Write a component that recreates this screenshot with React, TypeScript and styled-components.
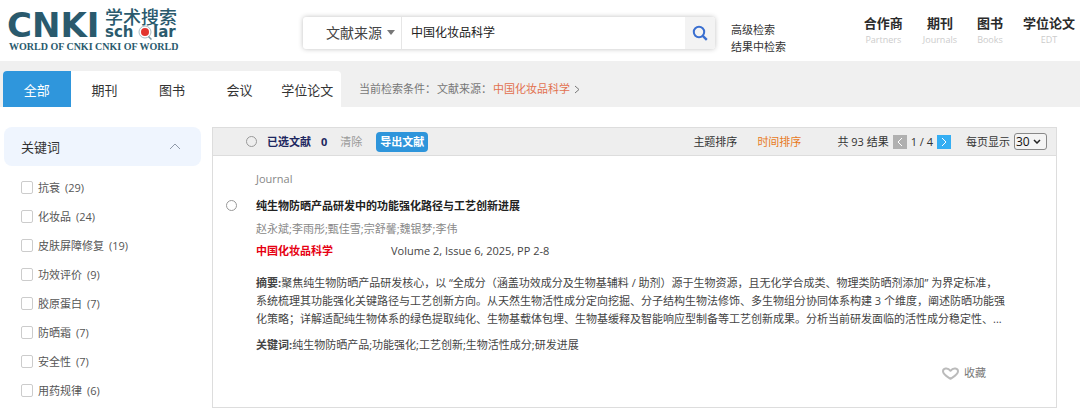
import React from "react";
import styled, { createGlobalStyle } from "styled-components";

const GlobalStyle = createGlobalStyle`
  *, *::before, *::after { box-sizing: border-box; }
  body {
    margin: 0;
    background: #fff;
    color: #444;
    font: 11px/18px "Open Sans", "Noto Sans CJK SC", sans-serif;
  }
  button, input, select { font: inherit; color: inherit; margin: 0; }
  button { cursor: pointer; }
  a { color: inherit; text-decoration: none; }
  h1, h2, p, ul { margin: 0; padding: 0; font-size: inherit; }
  ul { list-style: none; }
`;

const Header = styled.header`
  display: flex;
  align-items: center;
  height: 61px;
  padding: 0 5px 0 8px;
`;

const LogoLink = styled.a`
  display: block;
  flex: none;
  height: 57px;
  margin-right: 115px;
`;

const SearchForm = styled.form`
  display: flex;
  flex: 0 1 412px;
  height: 32px;
  margin-top: 4px;
  border-radius: 3px;
  background: #fff;
  box-shadow: 0 0 5px rgba(0, 0, 0, 0.25);
  overflow: hidden;
`;

const FieldPicker = styled.div`
  display: flex;
  align-items: center;
  width: 99px;
  flex: none;
  padding-left: 23px;
  gap: 5px;
  border-right: 1px solid #e6e6e6;
`;

const FieldSelect = styled.select`
  appearance: none;
  width: 56px;
  padding: 0;
  border: 0;
  background: transparent;
  font-size: 14px;
  line-height: 20px;
  color: #444;
`;

const SearchInput = styled.input`
  flex: 1;
  min-width: 0;
  border: 0;
  outline: 0;
  padding: 0 9px;
  font-size: 12px;
  color: #222;
`;

const SearchButton = styled.button`
  display: flex;
  align-items: center;
  justify-content: center;
  width: 30px;
  border: 0;
  padding: 0;
  background: #f3f3f3;
`;

const SearchLinks = styled.div`
  display: flex;
  flex-direction: column;
  margin: 14px 0 0 16px;
  line-height: 17px;
  color: #333;
`;

const SiteNav = styled.nav`
  display: flex;
  gap: 20px;
  margin-left: auto;
`;

const SiteNavLink = styled.a`
  display: flex;
  flex-direction: column;
  align-items: center;
  font-size: 13px;
  line-height: 18px;
  font-weight: 700;
  color: #2b2b2b;
`;

const SiteNavSub = styled.span`
  font-size: 9px;
  line-height: 15px;
  font-weight: 400;
  color: #ccc;
`;

const Band = styled.div`
  display: flex;
  align-items: flex-end;
  height: 46px;
  padding-left: 3px;
  background: #f0f0f0;
`;

const Tabs = styled.nav`
  display: flex;
  flex: 0 0 338px;
  height: 36px;
  border-radius: 4px 4px 0 0;
  background: #fff;
  overflow: hidden;
`;

const Tab = styled.a<{ $active?: boolean }>`
  flex: 1;
  text-align: center;
  font-size: 13px;
  line-height: 38px;
  color: ${(p) => (p.$active ? "#fff" : "#333")};
  background: ${(p) => (p.$active ? "#2f96dc" : "transparent")};
`;

const Conditions = styled.div`
  display: flex;
  align-items: center;
  height: 36px;
  margin-left: 18px;
  gap: 1px;
  color: #777;
`;

const ConditionValue = styled.a`
  display: flex;
  align-items: center;
  gap: 4px;
  color: #e2714f;
`;

const Page = styled.div`
  display: flex;
  align-items: flex-start;
  gap: 11px;
  padding: 20px 23px 6px 4px;
`;

const Sidebar = styled.aside`
  flex: 0 0 197px;
`;

const FacetHeader = styled.button`
  display: flex;
  align-items: center;
  justify-content: space-between;
  width: 100%;
  height: 39px;
  padding: 0 20px 0 17px;
  border: 0;
  border-radius: 8px;
  background: #eff5fe;
  font-size: 13px;
  color: #333;
`;

const FacetList = styled.ul`
  padding: 7px 0 0 17px;
`;

const FacetLabel = styled.label`
  display: flex;
  align-items: center;
  gap: 5px;
  height: 29px;
  color: #555;
`;

const Checkbox = styled.input`
  appearance: none;
  width: 12px;
  height: 13px;
  border: 1px solid #ccc;
  border-radius: 2px;
  background: #fff;
`;

const Radio = styled.input`
  appearance: none;
  flex: none;
  width: 11px;
  height: 11px;
  border: 1px solid #999;
  border-radius: 50%;
  background: transparent;
`;

const Results = styled.main`
  flex: 1;
  min-width: 0;
  border: 1px solid #ddd;
`;

const Toolbar = styled.div`
  display: flex;
  align-items: center;
  height: 28px;
  padding: 0 9px 0 33px;
  background: #eee;
  border-bottom: 1px solid #ddd;
  white-space: nowrap;
  color: #333;
`;

const Selected = styled.label`
  display: flex;
  align-items: center;
  gap: 10px;
  font-weight: 700;
  color: #1d2760;
`;

const ClearButton = styled.button`
  margin-left: 13px;
  padding: 0;
  border: 0;
  background: transparent;
  color: #999;
`;

const ExportButton = styled.button`
  height: 20px;
  margin-left: 14px;
  padding: 0 4px;
  border: 0;
  border-radius: 4px;
  background: #2e95db;
  color: #fff;
  font-weight: 700;
`;

const Sorting = styled.div`
  display: flex;
  gap: 20px;
  margin-left: auto;
`;

const SortLink = styled.a<{ $active?: boolean }>`
  color: ${(p) => (p.$active ? "#e87a1d" : "#333")};
`;

const Pager = styled.div`
  display: flex;
  align-items: center;
  gap: 4px;
  margin-left: 36px;
`;

const PageButton = styled.button<{ $muted?: boolean }>`
  display: flex;
  align-items: center;
  justify-content: center;
  width: 14px;
  height: 14px;
  padding: 0;
  border: 0;
  background: ${(p) => (p.$muted ? "#b0b0b0" : "#35aef3")};
`;

const PageSize = styled.label`
  display: flex;
  align-items: center;
  gap: 4px;
  margin-left: 15px;
`;

const SizeBox = styled.span`
  display: flex;
  align-items: center;
  width: 33px;
  height: 17px;
  padding-right: 5px;
  border: 1px solid #888;
  border-radius: 3px;
  background: #f4f4f4;
`;

const SizeSelect = styled.select`
  appearance: none;
  flex: 1;
  min-width: 0;
  height: 15px;
  padding: 0 0 0 1px;
  border: 0;
  background: transparent;
  font-size: 12px;
  line-height: 15px;
  color: #111;
`;

const Article = styled.article`
  display: grid;
  grid-template-columns: 30px 1fr;
  padding: 14px 40px 25px 13px;
`;

const PickCell = styled.div`
  display: flex;
  padding-top: 30px;
`;

const Kind = styled.p`
  line-height: 18px;
  color: #888;
`;

const Title = styled.h1`
  margin-top: 9px;
  line-height: 18px;
  font-weight: 700;
  color: #222;
`;

const Authors = styled.p`
  margin-top: 5px;
  line-height: 18px;
  color: #888;
`;

const Source = styled.div`
  display: flex;
  gap: 58px;
  margin-top: 4px;
  line-height: 18px;
`;

const SourceName = styled.a`
  font-weight: 700;
  color: #e60012;
`;

const Abstract = styled.p`
  margin-top: 14px;
  line-height: 18px;
  color: #444;
`;

const Keywords = styled.p`
  margin-top: 8px;
  line-height: 18px;
  color: #444;
`;

const Favorite = styled.button`
  display: flex;
  align-items: center;
  gap: 5px;
  margin: 10px 30px 0 auto;
  padding: 0;
  border: 0;
  background: transparent;
  color: #777;
`;

const Logo = () => (
  <svg width="180" height="57" viewBox="0 0 180 57" role="img" aria-label="CNKI 学术搜索">
    <g fill="#2a5a6d">
      <text x="-1" y="35" fontFamily="DejaVu Sans" fontWeight="700" fontSize="34">CNKI</text>
      <text x="97" y="22" fontFamily="Noto Sans CJK SC" fontWeight="500" fontSize="18">学术搜索</text>
      <text x="97" y="35" fontFamily="DejaVu Sans" fontWeight="700" fontSize="15">sch</text>
      <text x="145" y="35" fontFamily="DejaVu Sans" fontWeight="700" fontSize="15">lar</text>
      <text x="1" y="48" fontFamily="Liberation Serif" fontWeight="700" fontSize="10">
        WORLD OF CNKI CNKI OF WORLD
      </text>
    </g>
    <circle cx="137" cy="30" r="6" fill="#fff" stroke="#a9bcc4" />
    <circle cx="137" cy="30" r="4" fill="#e3352f" />
    <path d="M140.500 34.500l3 3" stroke="#7a97a3" strokeWidth="1.5" />
  </svg>
);

const Chevron = ({ d, color, w, h, sw = 1 }: { d: string; color: string; w: number; h: number; sw?: number }) => (
  <svg width={w} height={h} viewBox={`0 0 ${w} ${h}`} fill="none" stroke={color} strokeWidth={sw} aria-hidden="true">
    <path d={d} />
  </svg>
);

const siteLinks = [
  ["合作商", "Partners"],
  ["期刊", "Journals"],
  ["图书", "Books"],
  ["学位论文", "EDT"],
];

const tabs = ["全部", "期刊", "图书", "会议", "学位论文"];

const facets: [string, number][] = [
  ["抗衰", 29],
  ["化妆品", 24],
  ["皮肤屏障修复", 19],
  ["功效评价", 9],
  ["胶原蛋白", 7],
  ["防晒霜", 7],
  ["安全性", 7],
  ["用药规律", 6],
];

export default function App() {
  return (
    <div lang="zh-CN">
      <GlobalStyle />
      <Header>
        <LogoLink href="#">
          <Logo />
        </LogoLink>
        <SearchForm onSubmit={(e) => e.preventDefault()}>
          <FieldPicker>
            <FieldSelect aria-label="检索字段">
              <option>文献来源</option>
            </FieldSelect>
            <svg width="8" height="5" viewBox="0 0 8 5" aria-hidden="true">
              <path d="M0 0h8L4 5z" fill="#777" />
            </svg>
          </FieldPicker>
          <SearchInput aria-label="检索词" defaultValue="中国化妆品科学" />
          <SearchButton aria-label="检索">
            <svg width="16" height="16" viewBox="0 0 16 16" fill="none" stroke="#3a6fd0" aria-hidden="true">
              <circle cx="7" cy="7" r="5.2" strokeWidth="2" />
              <path d="M10.8 10.8l4 4" strokeWidth="2.4" />
            </svg>
          </SearchButton>
        </SearchForm>
        <SearchLinks>
          <a href="#">高级检索</a>
          <a href="#">结果中检索</a>
        </SearchLinks>
        <SiteNav>
          {siteLinks.map(([name, sub]) => (
            <SiteNavLink href="#" key={name}>
              {name}
              <SiteNavSub>{sub}</SiteNavSub>
            </SiteNavLink>
          ))}
        </SiteNav>
      </Header>

      <Band>
        <Tabs>
          {tabs.map((t, i) => (
            <Tab href="#" key={t} $active={i === 0}>
              {t}
            </Tab>
          ))}
        </Tabs>
        <Conditions>
          <span>当前检索条件：</span>
          <span>文献来源：</span>
          <ConditionValue href="#">
            中国化妆品科学
            <Chevron w={6} h={9} d="M1 1l4 3.5L1 8" color="#777" />
          </ConditionValue>
        </Conditions>
      </Band>

      <Page>
        <Sidebar>
          <FacetHeader>
            关键词
            <Chevron w={12} h={7} d="M1 6l5-5 5 5" color="#8f99a8" />
          </FacetHeader>
          <FacetList>
            {facets.map(([name, count]) => (
              <li key={name}>
                <FacetLabel>
                  <Checkbox type="checkbox" />
                  <span>{name}</span>
                  <span>({count})</span>
                </FacetLabel>
              </li>
            ))}
          </FacetList>
        </Sidebar>

        <Results>
          <Toolbar>
            <Selected>
              <Radio type="radio" name="all" />
              <span>已选文献</span>
              <span>0</span>
            </Selected>
            <ClearButton>清除</ClearButton>
            <ExportButton>导出文献</ExportButton>
            <Sorting>
              <SortLink href="#">主题排序</SortLink>
              <SortLink href="#" $active>
                时间排序
              </SortLink>
            </Sorting>
            <Pager>
              <span>共 93 结果</span>
              <PageButton $muted aria-label="上一页">
                <Chevron w={6} h={10} d="M5 1L1 5l4 4" color="#fff" />
              </PageButton>
              <span>1 / 4</span>
              <PageButton aria-label="下一页">
                <Chevron w={6} h={10} d="M1 1l4 4-4 4" color="#fff" />
              </PageButton>
            </Pager>
            <PageSize>
              每页显示
              <SizeBox>
                <SizeSelect defaultValue="30">
                  <option>30</option>
                </SizeSelect>
                <Chevron w={8} h={5} d="M1 1l3 3 3-3" color="#222" sw={1.5} />
              </SizeBox>
            </PageSize>
          </Toolbar>

          <Article>
            <PickCell>
              <Radio type="radio" name="item" aria-label="选择文献" />
            </PickCell>
            <div>
              <Kind>Journal</Kind>
              <Title>纯生物防晒产品研发中的功能强化路径与工艺创新进展</Title>
              <Authors>赵永斌;李雨彤;甄佳雪;宗舒馨;魏银梦;李伟</Authors>
              <Source>
                <SourceName href="#">中国化妆品科学</SourceName>
                <span>Volume 2, Issue 6, 2025, PP 2-8</span>
              </Source>
              <Abstract>
                <b>摘要:</b>
                聚焦纯生物防晒产品研发核心，以 “全成分（涵盖功效成分及生物基辅料 / 助剂）源于生物资源，且无化学合成类、物理类防晒剂添加” 为界定标准，
                <br />
                系统梳理其功能强化关键路径与工艺创新方向。从天然生物活性成分定向挖掘、分子结构生物法修饰、多生物组分协同体系构建 3 个维度，阐述防晒功能强
                <br />
                化策略；详解适配纯生物体系的绿色提取纯化、生物基载体包埋、生物基缓释及智能响应型制备等工艺创新成果。分析当前研发面临的活性成分稳定性、...
              </Abstract>
              <Keywords>
                <b>关键词:</b>纯生物防晒产品;功能强化;工艺创新;生物活性成分;研发进展
              </Keywords>
              <Favorite>
                <svg width="17" height="13" viewBox="0 0 17 13" fill="none" stroke="#bbb" strokeWidth="2" strokeLinejoin="round" aria-hidden="true">
                  <path d="M8.5 11.8C5 9.500 1 7.500 1 4.300C1 1.500 5.500 0 8.500 3.800C11.500 0 16 1.500 16 4.300C16 7.500 12 9.500 8.500 11.800Z" />
                </svg>
                收藏
              </Favorite>
            </div>
          </Article>
        </Results>
      </Page>
    </div>
  );
}
